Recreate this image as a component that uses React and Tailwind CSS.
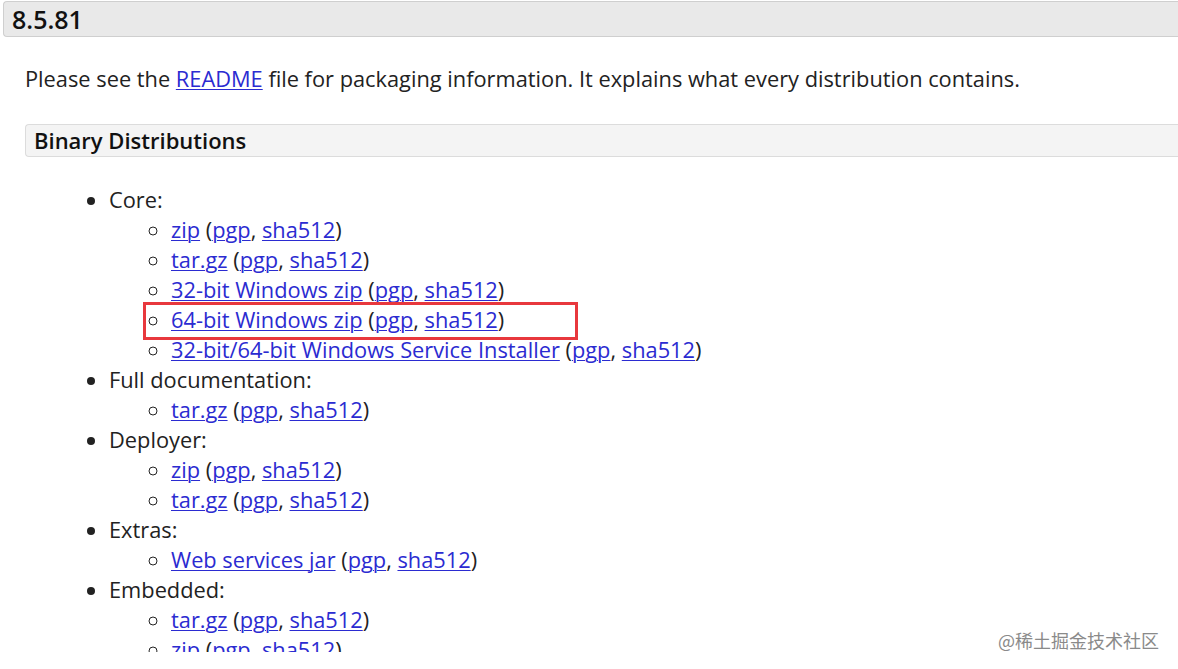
import React from "react";

const Link = ({ children }) => (
  <a href="#" className="text-[#2b2bd1] underline underline-offset-2 decoration-1">
    {children}
  </a>
);

const Item = ({ label, boxed }) => (
  <li className={boxed ? "relative" : ""}>
    {boxed && (
      <span className="absolute left-[-28px] top-[-3px] w-[435px] h-[38px] border-[3px] border-[#e8383d]" />
    )}
    <Link>{label}</Link> (<Link>pgp</Link>, <Link>sha512</Link>)
  </li>
);

const groups = [
  { name: "Core:", items: ["zip", "tar.gz", "32-bit Windows zip", "64-bit Windows zip", "32-bit/64-bit Windows Service Installer"] },
  { name: "Full documentation:", items: ["tar.gz"] },
  { name: "Deployer:", items: ["zip", "tar.gz"] },
  { name: "Extras:", items: ["Web services jar"] },
  { name: "Embedded:", items: ["tar.gz", "zip"] },
];

export default function App() {
  return (
    <div
      className="relative h-[669px] w-[1178px] overflow-hidden bg-white text-[#222] text-[21.8px] leading-[30px]"
      style={{ fontFamily: '"Open Sans", "Noto Sans", sans-serif' }}
    >
      {/* the reference is cropped just below the last link */}
      <div className="h-[652px] overflow-hidden">
        <div className="ml-[3px] mt-[1px] h-[36px] rounded-l-[4px] border border-r-0 border-[#cfcfcf] bg-[#e9e9e9] pl-[8px] text-[25px] leading-[34px] font-semibold text-[#111]">
          8.5.81
        </div>
        <div className="pl-[25px]">
          <p className="mt-[27px] leading-[30px]">
            Please see the <Link>README</Link> file for packaging information. It explains what every distribution contains.
          </p>
          <div className="mt-[30px] h-[33px] rounded-l-[4px] border border-r-0 border-[#dcdcdc] bg-[#f4f4f4] pl-[8px] text-[22px] leading-[31px] font-semibold text-[#111]">
            Binary Distributions
          </div>
          <ul className="mt-[28px] list-disc pl-[84px]">
            {groups.map((g) => (
              <li key={g.name}>
                {g.name}
                <ul className="list-[circle] pl-[62px]">
                  {g.items.map((it, i) => (
                    <Item key={i} label={it} boxed={it === "64-bit Windows zip"} />
                  ))}
                </ul>
              </li>
            ))}
          </ul>
        </div>
      </div>
      <div
        className="absolute left-[998px] top-[625px] text-[18px] text-[#8a8a8a]"
        style={{ fontFamily: '"Noto Sans CJK SC", sans-serif' }}
      >
        @稀土掘金技术社区
      </div>
    </div>
  );
}
